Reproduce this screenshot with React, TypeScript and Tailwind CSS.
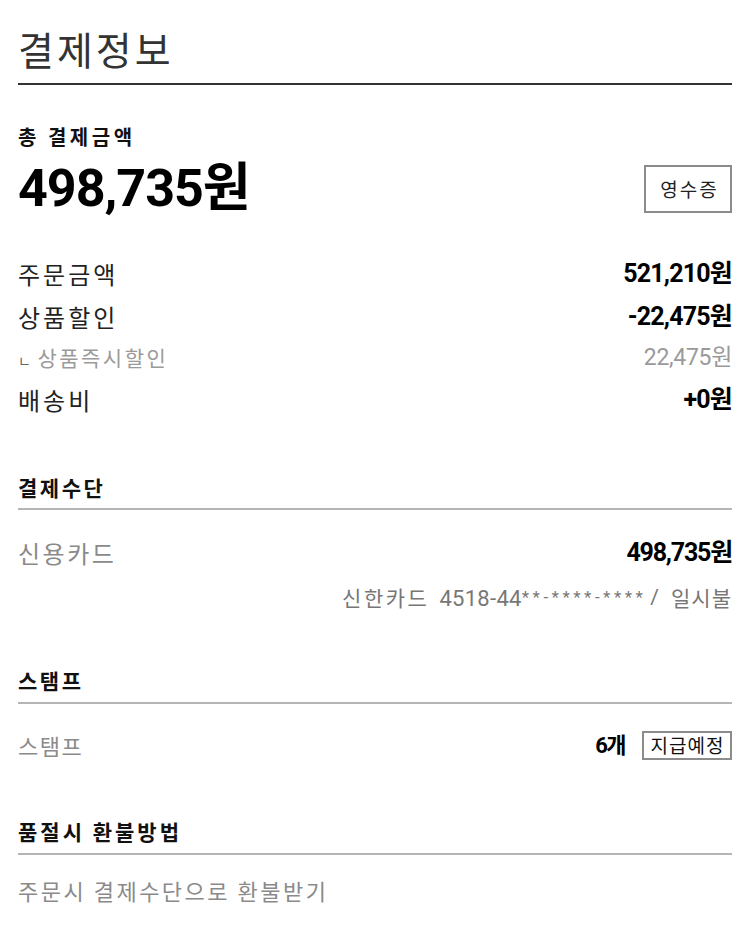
const kr = "font-['Noto_Sans_CJK_KR',sans-serif]";
const num = "font-['Roboto','Noto_Sans_CJK_KR',sans-serif]";

const Row = ({ label, value, h }: { label: string; value: string; h: string }) => (
  <div className={`flex items-center justify-between ${h}`}>
    <span className={`${kr} text-[24px] tracking-[3px] text-[#222]`}>{label}</span>
    <span className={`${num} text-[25px] font-bold tracking-[-0.8px] text-black`}>{value}</span>
  </div>
);

const SectionTitle = ({ title, mt, h, track }: { title: string; mt: string; h: string; track: string }) => (
  <div className={`${mt} ${h} border-b-2 border-[#b5b5b5]`}>
    <h3 className={`${kr} ${track} text-[21px] font-bold leading-[28px] text-[#111]`}>{title}</h3>
  </div>
);

export default function App() {
  return (
    <div className="w-[750px] min-h-[939px] bg-white px-[18px]">
      <div className="h-[85px] border-b-2 border-[#333] pt-[24px]">
        <h1 className={`${kr} text-[39px] font-normal leading-[48px] tracking-[3px] text-[#333]`}>결제정보</h1>
      </div>

      <p className={`${kr} mt-[40px] text-[20px] font-bold leading-[24px] tracking-[3.5px] text-[#111]`}>
        총 결제금액
      </p>
      <div className="mt-[16px] flex h-[48px] items-center justify-between">
        <span className={`${num} text-[52px] font-bold leading-[48px] tracking-[-1px] text-black`}>
          498,735원
        </span>
        <button
          className={`${kr} h-[48px] w-[88px] border-2 border-[#8c8c8c] pl-[3px] text-[19px] tracking-[2px] text-[#222]`}
        >
          영수증
        </button>
      </div>

      <div className="mt-[39px]">
        <Row label="주문금액" value="521,210원" h="h-[43px]" />
        <Row label="상품할인" value="-22,475원" h="h-[43px]" />
        <div className="flex h-[40px] items-center justify-between">
          <span className={`${kr} text-[21px] tracking-[2.5px] text-[#9a9a9a]`}>
            <span className="mr-[4px] text-[14px] text-[#666]">ㄴ</span>상품즉시할인
          </span>
          <span className={`${num} text-[23px] tracking-[-0.3px] text-[#9a9a9a]`}>22,475원</span>
        </div>
        <Row label="배송비" value="+0원" h="h-[44px]" />
      </div>

      <SectionTitle title="결제수단" mt="mt-[51px]" h="h-[37px]" track="tracking-[2.5px]" />
      <div className="mt-[27px] flex h-[32px] items-center justify-between">
        <span className={`${kr} text-[24px] tracking-[2.5px] text-[#8a8a8a]`}>신용카드</span>
        <span className={`${num} text-[25px] font-bold tracking-[-1.2px] text-black`}>498,735원</span>
      </div>
      <div className="mt-[15px] flex h-[28px] items-center justify-end">
        <span className={`${kr} flex items-center text-[21px] text-[#777]`}>
          <span className="tracking-[2.5px]">신한카드</span>
          <span className={`${num} ml-[10px] text-[22px] tracking-[0.3px]`}>4518-44</span>
          <span className={`${num} text-[17px] tracking-[3.5px]`}>**-****-****</span>
          <span className={`${num} ml-[4px] text-[21px]`}>/</span>
          <span className="ml-[12px] tracking-[1px]">일시불</span>
        </span>
      </div>

      <SectionTitle title="스탬프" mt="mt-[54px]" h="h-[38px]" track="tracking-[2.5px]" />
      <div className="mt-[26px] flex h-[30px] items-center justify-between">
        <span className={`${kr} text-[22px] tracking-[1.5px] text-[#8a8a8a]`}>스탬프</span>
        <div className="flex items-center gap-[17px]">
          <span className={`${num} text-[22px] font-bold tracking-[-1.5px] text-black`}>6개</span>
          <span
            className={`${kr} flex h-[29px] w-[90px] items-center justify-center border-2 border-[#8c8c8c] pl-[1px] text-[19px] tracking-[1px] text-[#111]`}
          >
            지급예정
          </span>
        </div>
      </div>

      <SectionTitle title="품절시 환불방법" mt="mt-[57px]" h="h-[38px]" track="tracking-[3px]" />
      <p className={`${kr} mt-[21px] text-[22px] leading-[28px] tracking-[2.5px] text-[#8a8a8a]`}>
        주문시 결제수단으로 환불받기
      </p>
    </div>
  );
}
